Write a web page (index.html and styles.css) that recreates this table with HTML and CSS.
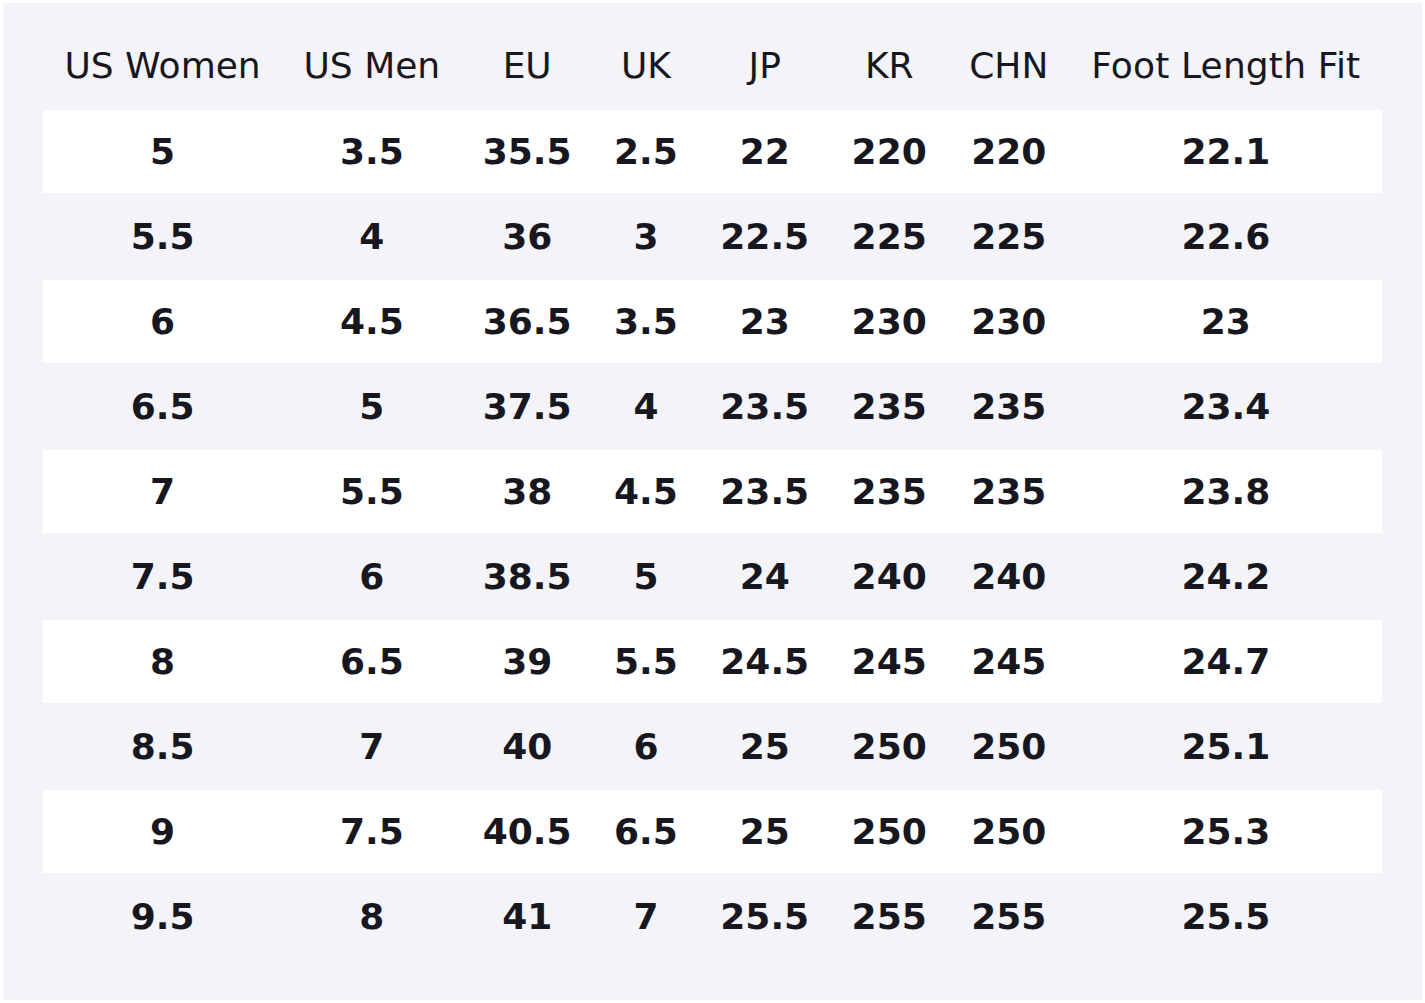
FILE: index.html
```html
<!DOCTYPE html>
<html lang="en">
<head>
<meta charset="utf-8">
<title>Size Chart</title>
<link rel="stylesheet" href="styles.css">
</head>
<body>
<div class="chart">
  <table class="size-table">
    <thead>
      <tr><th>US Women</th><th>US Men</th><th>EU</th><th>UK</th><th>JP</th><th>KR</th><th>CHN</th><th class="wide">Foot Length Fit</th></tr>
    </thead>
    <tbody>
      <tr><td>5</td><td>3.5</td><td>35.5</td><td>2.5</td><td>22</td><td>220</td><td>220</td><td>22.1</td></tr>
      <tr><td>5.5</td><td>4</td><td>36</td><td>3</td><td>22.5</td><td>225</td><td>225</td><td>22.6</td></tr>
      <tr><td>6</td><td>4.5</td><td>36.5</td><td>3.5</td><td>23</td><td>230</td><td>230</td><td>23</td></tr>
      <tr><td>6.5</td><td>5</td><td>37.5</td><td>4</td><td>23.5</td><td>235</td><td>235</td><td>23.4</td></tr>
      <tr><td>7</td><td>5.5</td><td>38</td><td>4.5</td><td>23.5</td><td>235</td><td>235</td><td>23.8</td></tr>
      <tr><td>7.5</td><td>6</td><td>38.5</td><td>5</td><td>24</td><td>240</td><td>240</td><td>24.2</td></tr>
      <tr><td>8</td><td>6.5</td><td>39</td><td>5.5</td><td>24.5</td><td>245</td><td>245</td><td>24.7</td></tr>
      <tr><td>8.5</td><td>7</td><td>40</td><td>6</td><td>25</td><td>250</td><td>250</td><td>25.1</td></tr>
      <tr><td>9</td><td>7.5</td><td>40.5</td><td>6.5</td><td>25</td><td>250</td><td>250</td><td>25.3</td></tr>
      <tr><td>9.5</td><td>8</td><td>41</td><td>7</td><td>25.5</td><td>255</td><td>255</td><td>25.5</td></tr>
    </tbody>
  </table>
</div>
</body>
</html>
```
FILE: styles.css
```css
html, body {
  background: #ffffff;
}
body {
  margin: 3px;
  font-family: "DejaVu Sans", sans-serif;
  color: #17171f;
}
.chart {
  background: #f3f3f8;
  padding: 40px;
  min-height: 916px;
}
.size-table {
  width: 100%;
  border-collapse: separate;
  border-spacing: 0 2px;
  font-size: 36px;
  line-height: 42px;
}
.size-table th {
  font-weight: normal;
  padding: 0 21px 21px;
  text-align: center;
  white-space: nowrap;
}
.size-table th.wide {
  letter-spacing: 0.15px;
}
.size-table td {
  font-weight: bold;
  padding: 20.5px 21px;
  text-align: center;
  white-space: nowrap;
}
.size-table tbody tr:nth-child(odd) td {
  background: #ffffff;
}
```
